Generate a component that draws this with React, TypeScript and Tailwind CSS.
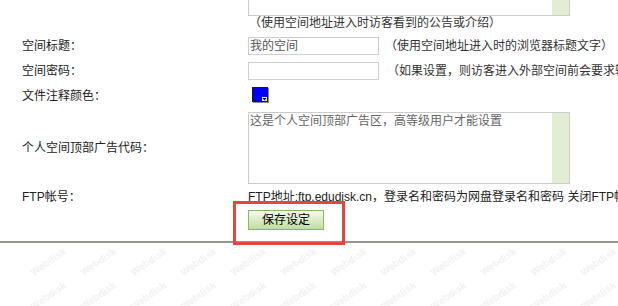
import React from 'react'

const FONT = "font-['Liberation_Sans','Noto_Sans_CJK_SC',sans-serif]"

function FakeTextarea({ text }: { text?: string }) {
  return (
    <div className="w-[322px] h-[72px] shrink-0 border border-[#cbcbcb] flex bg-white">
      <div className="flex-1 px-[1px] pt-[1px] leading-[14px] text-[#666]">{text}</div>
      <div className="w-[17px] bg-[#e2eed3]" />
    </div>
  )
}

function ColorPick() {
  return (
    <svg width="17" height="16" viewBox="0 0 17 16">
      <rect x="0.5" y="0.5" width="15" height="14" fill="#0000ff" stroke="#1a1a1a" />
      <rect x="16" y="1" width="1" height="15" fill="#8a8a8a" />
      <rect x="1" y="15" width="16" height="1" fill="#8a8a8a" />
      <rect x="10" y="10" width="5" height="4" fill="#e6e6e6" />
      <path d="M10.5 11h4l-2 2.5z" fill="#000" />
    </svg>
  )
}

export default function App() {
  const marks = Array.from({ length: 26 })
  return (
    <div className={`w-[618px] h-[306px] overflow-hidden bg-white text-[12px] text-[#222] ${FONT}`}>
      <div className="flex flex-col gap-[7px] pl-[22px] -mt-[56px]">
        {/* 空间公告 */}
        <div className="flex">
          <div className="w-[226px] shrink-0" />
          <div className="flex flex-col">
            <FakeTextarea />
            <div className="leading-[14px] pl-[1px] text-[#333] whitespace-nowrap">
              （使用空间地址进入时访客看到的公告或介绍）
            </div>
          </div>
        </div>

        <div className="flex leading-[18px]">
          <div className="w-[226px] shrink-0">空间标题：</div>
          <div className="w-[131px] h-[18px] shrink-0 border border-[#cfcfcf] px-[1px] leading-[16px] text-[#555]">
            我的空间
          </div>
          <div className="ml-[6px] text-[#333] whitespace-nowrap">（使用空间地址进入时的浏览器标题文字）</div>
        </div>

        <div className="flex leading-[18px]">
          <div className="w-[226px] shrink-0">空间密码：</div>
          <div className="w-[131px] h-[18px] shrink-0 border border-[#cfcfcf]" />
          <div className="ml-[8px] text-[#333] whitespace-nowrap">
            （如果设置，则访客进入外部空间前会要求输入密码）
          </div>
        </div>

        <div className="flex leading-[18px] h-[18px]">
          <div className="w-[226px] shrink-0">文件注释颜色：</div>
          <div className="pl-[4px]">
            <ColorPick />
          </div>
        </div>

        <div className="flex items-center">
          <div className="w-[226px] shrink-0 leading-[18px]">个人空间顶部广告代码：</div>
          <FakeTextarea text="这是个人空间顶部广告区，高等级用户才能设置" />
        </div>

        <div className="flex leading-[12px] h-[12px]">
          <div className="w-[226px] shrink-0">FTP帐号：</div>
          <div className="whitespace-nowrap">
            FTP地址:ftp.edudisk.cn，登录名和密码为网盘登录名和密码 关闭FTP帐号
          </div>
        </div>

        <div className="flex">
          <div className="w-[226px] shrink-0" />
          <div className="relative">
            <button className="w-[76px] h-[20px] border border-[#86bd5c] bg-gradient-to-b from-[#f4faee] to-[#bfdd9f] text-[12px] leading-[18px] text-black">
              保存设定
            </button>
            <div className="absolute left-[-15px] top-[-9px] w-[112px] h-[44px] border-[3px] border-[#e4453f] z-10" />
          </div>
        </div>
      </div>

      <div className="mt-[11px] h-[2px] bg-[#96968c]" />

      <div className="grid grid-cols-[repeat(13,50px)] auto-rows-[34px] pt-[2px] ml-[23px]">
        {marks.map((_, i) => (
          <div key={i} className="flex items-center justify-center">
            <span className="rotate-[-35deg] font-bold text-[10px] leading-[10px] text-[#f2f2f2]">
              Webdisk
            </span>
          </div>
        ))}
      </div>
    </div>
  )
}
